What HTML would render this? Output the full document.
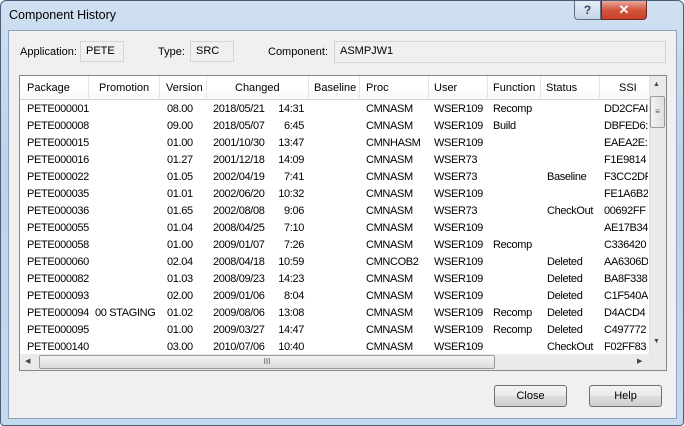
<!DOCTYPE html>
<html><head><meta charset="utf-8"><style>
*{margin:0;padding:0;box-sizing:border-box}
body{width:684px;height:426px;overflow:hidden;font-family:"Liberation Sans",sans-serif;font-size:11px;color:#000;background:#fff}
.win{position:absolute;left:0;top:0;width:684px;height:426px;border:1px solid #4a5e75;border-radius:6px 6px 4px 4px;background:linear-gradient(#cfe0f1,#bcd3ea 40%,#c5daef);}
.title{position:absolute;left:8px;top:7px;font-size:12.5px;color:#000}
.cli{position:absolute;left:7px;top:29px;width:669px;height:389px;background:#f0f0f0;border:1px solid #8ea3bb}
.abs{position:absolute}
.lbl{position:absolute;font-size:11px}
.box{position:absolute;border:1px solid #d5d5d5;background:#f0f0f0;font-size:11px;padding:3px 0 0 5px}
.tbl{position:absolute;left:19px;top:75px;width:648px;height:296px;border:1px solid #828790;background:#fff}
.hdr{position:absolute;left:0;top:0;width:629px;height:24px;background:linear-gradient(#fff,#fff 50%,#f7f8fa);border-bottom:1px solid #d5d5d5}
.sep{position:absolute;top:0;width:1px;height:24px;background:#e3e5e7}
.h{position:absolute;top:6px}
.r{position:absolute;white-space:nowrap;letter-spacing:-0.35px}
.btn{position:absolute;width:73px;height:22px;border:1px solid #707070;border-radius:3px;background:linear-gradient(#f2f2f2,#ebebeb 50%,#dddddd 51%,#cfcfcf);text-align:center;line-height:20px;font-size:11px}
</style></head><body>
<div class="win">
<div class="title">Component History</div>
<div class="abs" style="left:573px;top:0;width:27px;height:19px;border:1px solid #5b6f86;border-top:none;border-radius:0 0 0 4px;background:linear-gradient(#e4edf6,#c5d5e6);text-align:center;font-size:12px;color:#3a4a5c;font-weight:bold;line-height:18px">?</div>
<div class="abs" style="left:600px;top:0;width:46px;height:19px;border:1px solid #6d2a20;border-top:none;border-radius:0 0 4px 0;background:linear-gradient(#e9a99c,#d2553e 50%,#c8412a);text-align:center;color:#fff;font-weight:bold;font-size:13px;line-height:18px">✕</div>
<div class="cli"></div>
</div>
<div class="lbl" style="left:20px;top:46px">Application:</div>
<div class="box" style="left:80px;top:41px;width:44px;height:21px">PETE</div>
<div class="lbl" style="left:158px;top:46px">Type:</div>
<div class="box" style="left:190px;top:41px;width:44px;height:21px">SRC</div>
<div class="lbl" style="left:268px;top:46px">Component:</div>
<div class="box" style="left:334px;top:41px;width:332px;height:22px">ASMPJW1</div>

<div class="tbl">
<div class="hdr">
<div class="h" style="left:7px">Package</div>
<div class="sep" style="left:68px"></div>
<div class="h" style="left:79px">Promotion</div>
<div class="sep" style="left:139px"></div>
<div class="h" style="left:146px">Version</div>
<div class="sep" style="left:186px"></div>
<div class="h" style="left:215px">Changed</div>
<div class="sep" style="left:288px"></div>
<div class="h" style="left:294px">Baseline</div>
<div class="sep" style="left:339px"></div>
<div class="h" style="left:346px">Proc</div>
<div class="sep" style="left:408px"></div>
<div class="h" style="left:414px">User</div>
<div class="sep" style="left:467px"></div>
<div class="h" style="left:473px">Function</div>
<div class="sep" style="left:520px"></div>
<div class="h" style="left:526px">Status</div>
<div class="sep" style="left:579px"></div>
<div class="h" style="left:599px">SSI</div>
</div>
<div class="abs" style="left:629px;top:0;width:17px;height:278px;background:#eaeaea;border-left:1px solid #e0e0e0"></div>
<div class="abs" style="left:633px;top:5px;font-size:7px;color:#444">▲</div>
<div class="abs" style="left:630px;top:20px;width:15px;height:32px;border:1px solid #9a9a9a;border-radius:2px;background:linear-gradient(90deg,#f3f3f3,#dedede);font-size:8px;text-align:center;line-height:30px;color:#555">≡</div>
<div class="abs" style="left:633px;top:262px;font-size:7px;color:#444">▼</div>
<div class="abs" style="left:0;top:278px;width:646px;height:16px;background:#eaeaea"></div>
<div class="abs" style="left:5px;top:281px;font-size:7px;color:#444">◀</div>
<div class="abs" style="left:19px;top:279px;width:456px;height:14px;border:1px solid #9a9a9a;border-radius:2px;background:linear-gradient(#f3f3f3,#dcdcdc);font-size:8px;text-align:center;line-height:12px;color:#555">III</div>
<div class="abs" style="left:617px;top:281px;font-size:7px;color:#444">▶</div>
</div>

<div class="btn" style="left:494px;top:385px">Close</div>
<div class="btn" style="left:589px;top:385px">Help</div>

<div class="abs" style="left:20px;top:103px;width:628px;height:250px;overflow:hidden">
<div style="position:relative">
<script>
var d=[
["PETE000001","","08.00","2018/05/21","14:31","CMNASM","WSER109","Recomp","","DD2CFAI"],
["PETE000008","","09.00","2018/05/07"," 6:45","CMNASM","WSER109","Build","","DBFED6:"],
["PETE000015","","01.00","2001/10/30","13:47","CMNHASM","WSER109","","","EAEA2E:"],
["PETE000016","","01.27","2001/12/18","14:09","CMNASM","WSER73","","","F1E9814"],
["PETE000022","","01.05","2002/04/19"," 7:41","CMNASM","WSER73","","Baseline","F3CC2DF"],
["PETE000035","","01.01","2002/06/20","10:32","CMNASM","WSER109","","","FE1A6B2"],
["PETE000036","","01.65","2002/08/08"," 9:06","CMNASM","WSER73","","CheckOut","00692FF"],
["PETE000055","","01.04","2008/04/25"," 7:10","CMNASM","WSER109","","","AE17B34"],
["PETE000058","","01.00","2009/01/07"," 7:26","CMNASM","WSER109","Recomp","","C336420"],
["PETE000060","","02.04","2008/04/18","10:59","CMNCOB2","WSER109","","Deleted","AA6306D"],
["PETE000082","","01.03","2008/09/23","14:23","CMNASM","WSER109","","Deleted","BA8F338"],
["PETE000093","","02.00","2009/01/06"," 8:04","CMNASM","WSER109","","Deleted","C1F540A"],
["PETE000094","00 STAGING","01.02","2009/08/06","13:08","CMNASM","WSER109","Recomp","Deleted","D4ACD4"],
["PETE000095","","01.00","2009/03/27","14:47","CMNASM","WSER109","Recomp","Deleted","C497772"],
["PETE000140","","03.00","2010/07/06","10:40","CMNASM","WSER109","","CheckOut","F02FF83"]];
var h="";
d.forEach(function(r,i){var t=i*17;
function c(x,s,w){h+='<div class="r" style="left:'+x+'px;top:'+t+'px;'+(w?'width:'+w+'px;overflow:hidden':'')+'">'+s+'</div>';}
c(7,r[0]);c(75,r[1]);c(147,r[2]);c(193,r[3]);
h+='<div class="r" style="left:245px;top:'+t+'px;width:39px;text-align:right">'+r[4]+'</div>';
c(346,r[5]);c(414,r[6]);c(473,r[7]);c(527,r[8]);c(584,r[9],44);});
document.write(h);
</script>
</div></div>
</body></html>
